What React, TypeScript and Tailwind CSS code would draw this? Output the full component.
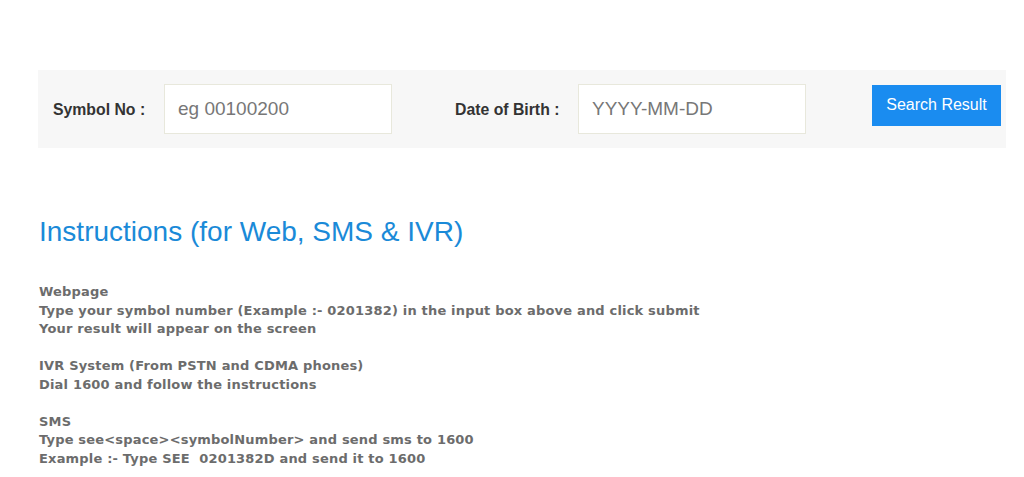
export default function App() {
  return (
    <div className="w-[1024px] h-[477px] bg-white overflow-hidden font-['Liberation_Sans',Arial,sans-serif]">
      <div className="pt-[70px] pl-[38px] pr-[18px]">
        {/* search bar */}
        <div className="h-[78px] bg-[#f7f7f7] flex items-center">
          <span className="ml-[15px] w-[111px] pt-[2px] text-[15.8px] font-bold text-[#333]">Symbol No :</span>
          <input
            placeholder="eg 00100200"
            className="w-[228px] h-[50px] bg-white border border-[#e8e8dc] px-[13px] text-[19px] text-[#555] placeholder:text-[#777] outline-none"
          />
          <span className="ml-[63px] w-[123px] pt-[2px] text-[15.8px] font-bold text-[#333]">Date of Birth :</span>
          <input
            placeholder="YYYY-MM-DD"
            className="w-[228px] h-[50px] bg-white border border-[#e8e8dc] px-[13px] text-[19px] text-[#555] placeholder:text-[#777] outline-none"
          />
          <button className="ml-[66px] mb-[8px] w-[129px] h-[41px] bg-[#1a8cf0] text-white text-[16px]">
            Search Result
          </button>
        </div>
      </div>

      <div className="pl-[39px] pt-[67px]">
        <h1 className="text-[28px] leading-[34px] text-[#1a8ad8]">Instructions (for Web, SMS &amp; IVR)</h1>
        <div className="mt-[34px] text-[13px] leading-[18.5px] font-bold tracking-[0.18px] text-[#6c6c6c] font-['DejaVu_Sans',Verdana,sans-serif]">
          <p>Webpage</p>
          <p>Type your symbol number (Example :- 0201382) in the input box above and click submit</p>
          <p>Your result will appear on the screen</p>
          <p className="mt-[18.5px]">IVR System (From PSTN and CDMA phones)</p>
          <p>Dial 1600 and follow the instructions</p>
          <p className="mt-[18.5px]">SMS</p>
          <p>Type see&lt;space&gt;&lt;symbolNumber&gt; and send sms to 1600</p>
          <p className="whitespace-pre">Example :- Type SEE  0201382D and send it to 1600</p>
        </div>
      </div>
    </div>
  );
}
